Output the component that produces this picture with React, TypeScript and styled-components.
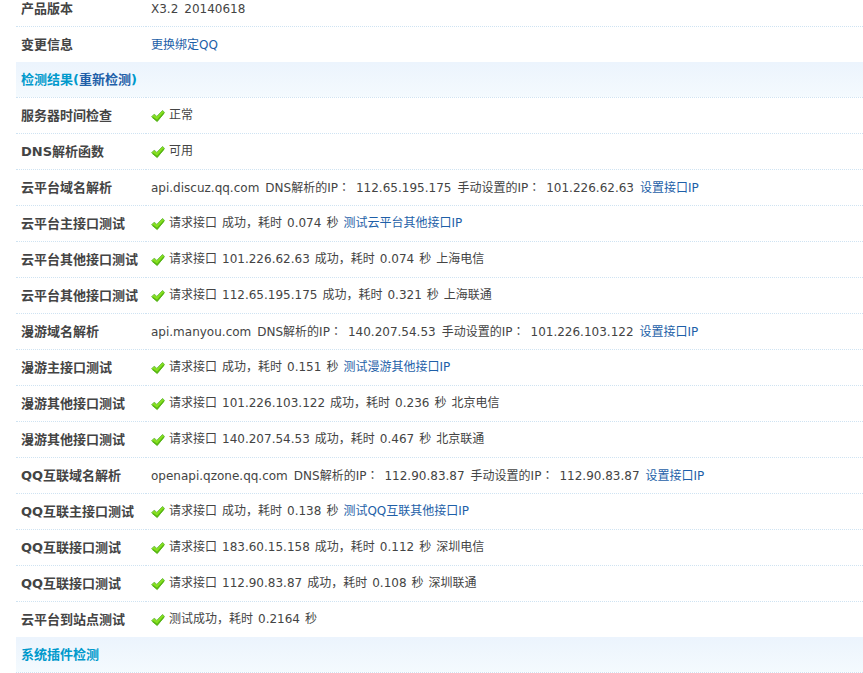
import React from "react";
import styled, { createGlobalStyle } from "styled-components";

const GlobalStyle = createGlobalStyle`
  body {
    margin: 0;
    background: #fff;
    color: #444;
    font: 12px/18px "DejaVu Sans", "Noto Sans CJK SC", sans-serif;
    overflow-x: hidden;
  }
`;

const Panel = styled.main`
  margin: -10px 0 0 16px;
`;

const Table = styled.table`
  width: 100%;
  border-collapse: separate;
  border-spacing: 0;
  table-layout: fixed;
  border-bottom: 1px dotted #cfe3f2;
`;

const LabelCol = styled.col`
  width: 130px;
`;

const Label = styled.th`
  height: 35px;
  padding: 0 0 0 5px;
  border-top: 1px dotted #cfe3f2;
  font-size: 13px;
  font-weight: 700;
  text-align: left;
  vertical-align: middle;
  white-space: nowrap;
`;

const Value = styled.td`
  height: 35px;
  padding: 0 0 0 5px;
  border-top: 1px dotted #cfe3f2;
  vertical-align: middle;
  white-space: nowrap;
`;

const Section = styled.th`
  height: 34px;
  padding: 0 0 0 5px;
  border-top: 1px solid #ecf4fd;
  background: linear-gradient(#ecf4fd, #f4fafe);
  color: #09c;
  font-size: 13px;
  font-weight: 700;
  text-align: left;
  vertical-align: middle;
`;

const Link = styled.a`
  color: #1e5fa8;
  text-decoration: none;
`;

const Line = styled.div<{ $raised?: boolean }>`
  display: flex;
  align-items: center;
  gap: 4px;
  padding-bottom: ${(p) => (p.$raised ? 2 : 0)}px;
`;

const Words = styled.div<{ $gap: number }>`
  display: flex;
  align-items: baseline;
  gap: ${(p) => p.$gap}px;
`;

const Colon = styled.span`
  font-family: "Noto Sans CJK TC", sans-serif;
`;

const Tick = styled.svg`
  flex: none;
  width: 14px;
  height: 14px;
  margin-top: 2px;
`;

function TickIcon() {
  return (
    <Tick viewBox="0 0 14 14" role="img" aria-label="正常">
      <path d="M.6 7.8 3.2 5.2 5.8 7.4 11.6 1.4 13.5 3.5 6.2 12.6z" fill="#86e01e" stroke="#72bf4a" strokeWidth="1" strokeLinejoin="round" />
      <path d="M1.8 8.6 6.1 11.6 12.8 4" fill="none" stroke="#57b512" strokeWidth="1.2" />
    </Tick>
  );
}

type Row = { label: string; ok?: boolean; parts: string[]; link?: string };

const info: Row[] = [
  { label: "产品版本", parts: ["X3.2", "20140618"] },
  { label: "变更信息", parts: [], link: "更换绑定QQ" },
];

const checks: Row[] = [
  { label: "服务器时间检查", ok: true, parts: ["正常"] },
  { label: "DNS解析函数", ok: true, parts: ["可用"] },
  { label: "云平台域名解析", parts: ["api.discuz.qq.com", "DNS解析的IP：", "112.65.195.175", "手动设置的IP：", "101.226.62.63"], link: "设置接口IP" },
  { label: "云平台主接口测试", ok: true, parts: ["请求接口", "成功，耗时", "0.074", "秒"], link: "测试云平台其他接口IP" },
  { label: "云平台其他接口测试", ok: true, parts: ["请求接口", "101.226.62.63", "成功，耗时", "0.074", "秒", "上海电信"] },
  { label: "云平台其他接口测试", ok: true, parts: ["请求接口", "112.65.195.175", "成功，耗时", "0.321", "秒", "上海联通"] },
  { label: "漫游域名解析", parts: ["api.manyou.com", "DNS解析的IP：", "140.207.54.53", "手动设置的IP：", "101.226.103.122"], link: "设置接口IP" },
  { label: "漫游主接口测试", ok: true, parts: ["请求接口", "成功，耗时", "0.151", "秒"], link: "测试漫游其他接口IP" },
  { label: "漫游其他接口测试", ok: true, parts: ["请求接口", "101.226.103.122", "成功，耗时", "0.236", "秒", "北京电信"] },
  { label: "漫游其他接口测试", ok: true, parts: ["请求接口", "140.207.54.53", "成功，耗时", "0.467", "秒", "北京联通"] },
  { label: "QQ互联域名解析", parts: ["openapi.qzone.qq.com", "DNS解析的IP：", "112.90.83.87", "手动设置的IP：", "112.90.83.87"], link: "设置接口IP" },
  { label: "QQ互联主接口测试", ok: true, parts: ["请求接口", "成功，耗时", "0.138", "秒"], link: "测试QQ互联其他接口IP" },
  { label: "QQ互联接口测试", ok: true, parts: ["请求接口", "183.60.15.158", "成功，耗时", "0.112", "秒", "深圳电信"] },
  { label: "QQ互联接口测试", ok: true, parts: ["请求接口", "112.90.83.87", "成功，耗时", "0.108", "秒", "深圳联通"] },
  { label: "云平台到站点测试", ok: true, parts: ["测试成功，耗时", "0.2164", "秒"] },
];

function Part({ text }: { text: string }) {
  if (!text.endsWith("：")) return <span>{text}</span>;
  return (
    <span>
      {text.slice(0, -1)}
      <Colon lang="zh-TW">：</Colon>
    </span>
  );
}

function Rows({ rows }: { rows: Row[] }) {
  return (
    <>
      {rows.map((row, i) => (
        <tr key={i}>
          <Label scope="row">{row.label}</Label>
          <Value>
            <Line $raised={row.ok}>
              {row.ok && <TickIcon />}
              <Words $gap={row.ok ? 5 : 6}>
                {row.parts.map((text, n) => (
                  <Part key={n} text={text} />
                ))}
                {row.link && <Link href="#">{row.link}</Link>}
              </Words>
            </Line>
          </Value>
        </tr>
      ))}
    </>
  );
}

export default function App() {
  return (
    <Panel>
      <GlobalStyle />
      <Table>
        <colgroup>
          <LabelCol />
          <col />
        </colgroup>
        <tbody>
          <Rows rows={info} />
          <tr>
            <Section colSpan={2}>
              检测结果(<Link href="#">重新检测</Link>)
            </Section>
          </tr>
          <Rows rows={checks} />
          <tr>
            <Section colSpan={2}>系统插件检测</Section>
          </tr>
        </tbody>
      </Table>
    </Panel>
  );
}
